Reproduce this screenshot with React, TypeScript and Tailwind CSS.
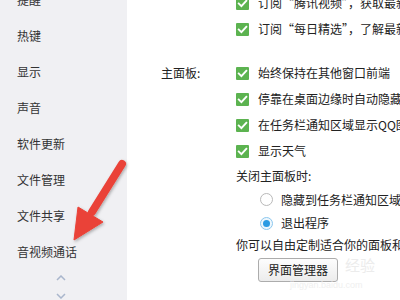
import React from "react";

const font = { fontFamily: '"Noto Sans CJK SC", "Liberation Sans", sans-serif' };

function Check() {
  return (
    <span className="w-[13px] h-[13px] bg-[#5cb350] flex items-center justify-center shrink-0 rounded-[1px]">
      <svg width="11" height="11" viewBox="0 0 11 11">
        <path d="M1.8 5.6 L4.4 8.2 L9.3 2.8" fill="none" stroke="white" strokeWidth="1.9" strokeLinecap="square" />
      </svg>
    </span>
  );
}

function CheckRow({ text, label }: { text: string; label?: string }) {
  return (
    <div className="grid grid-cols-[75px_1fr] h-[26px] items-center">
      <span>{label ?? ""}</span>
      <div className="flex items-center gap-[9px] whitespace-nowrap">
        <Check />
        <span>{text}</span>
      </div>
    </div>
  );
}

function Radio({ on, text, h }: { on?: boolean; text: string; h: string }) {
  return (
    <div className={`flex items-center gap-[8px] pl-[99px] whitespace-nowrap ${h}`}>
      <span
        className={`w-[13px] h-[13px] rounded-full border flex items-center justify-center shrink-0 ${
          on ? "border-[#8cc7ee] bg-[#eef7fd]" : "border-[#b9b9b9] bg-white"
        }`}
      >
        {on && <span className="w-[7px] h-[7px] rounded-full bg-[#2b9be3]" />}
      </span>
      <span>{text}</span>
    </div>
  );
}

const side = ["提醒", "热键", "显示", "声音", "软件更新", "文件管理", "文件共享", "音视频通话"];

export default function App() {
  return (
    <div className="w-[400px] h-[300px] flex overflow-hidden relative text-[12px] text-[#222]" style={font}>
      <div className="w-[127px] shrink-0 h-full bg-[#f0f0f3] flex flex-col pl-[17px] text-[#333]">
        <div className="-mt-[18px] flex flex-col">
          {side.map((s) => (
            <div key={s} className="h-[36px] flex items-center whitespace-nowrap">
              {s}
            </div>
          ))}
        </div>
        <div className="flex flex-col items-center w-[88px] mt-[5px] gap-[12px]">
          <svg width="10" height="6" viewBox="0 0 10 6">
            <path d="M1 5 L5 1 L9 5" fill="none" stroke="#a9b6cc" strokeWidth="1.5" />
          </svg>
          <svg width="10" height="6" viewBox="0 0 10 6">
            <path d="M1 1 L5 5 L9 1" fill="none" stroke="#a9b6cc" strokeWidth="1.5" />
          </svg>
        </div>
      </div>
      <div className="flex-1 min-w-0 overflow-hidden bg-white flex flex-col pl-[34px]">
        <div className="-mt-[10px]">
          <CheckRow text="订阅“腾讯视频”，获取最新资讯" />
          <CheckRow text="订阅“每日精选”，了解最新动态" />
        </div>
        <div className="mt-[18px]">
          <CheckRow label="主面板:" text="始终保持在其他窗口前端" />
          <CheckRow text="停靠在桌面边缘时自动隐藏" />
          <CheckRow text="在任务栏通知区域显示QQ图标" />
          <CheckRow text="显示天气" />
        </div>
        <div className="h-[24px] flex items-center pl-[75px] whitespace-nowrap">关闭主面板时:</div>
        <Radio text="隐藏到任务栏通知区域，不退出程序" h="h-[23px]" />
        <Radio on text="退出程序" h="h-[24px]" />
        <div className="h-[20px] flex items-center pl-[75px] whitespace-nowrap">你可以自由定制适合你的面板和界面</div>
        <div className="pl-[97px] mt-[3px]">
          <button className="w-[80px] h-[24px] border border-[#acacac] rounded-[3px] bg-gradient-to-b from-[#fdfdfd] to-[#ececec] text-[12px] text-[#222] flex items-center justify-center">
            界面管理器
          </button>
        </div>
      </div>
      <div className="absolute left-[345px] top-[257px] text-[15px] leading-[16px] text-[#ececec] pointer-events-none">经验</div>
      <div className="absolute left-[290px] top-[280px] text-[9px] leading-[10px] text-[#efefef] pointer-events-none" style={{ fontFamily: '"Liberation Sans", sans-serif' }}>
        jingyan.baidu.com
      </div>
      <svg className="absolute left-0 top-0 pointer-events-none" width="400" height="300" viewBox="0 0 400 300">
        <defs>
          <filter id="sh" x="-20%" y="-20%" width="140%" height="140%">
            <feDropShadow dx="1" dy="1.5" stdDeviation="1.5" floodColor="#000" floodOpacity="0.3" />
          </filter>
        </defs>
        <g filter="url(#sh)" fill="#ea4238" stroke="#ea4238">
          <line x1="122" y1="164" x2="92" y2="212" strokeWidth="8" strokeLinecap="round" />
          <polygon points="78,207 103,222 74,240" strokeWidth="1" strokeLinejoin="round" />
        </g>
      </svg>
    </div>
  );
}
